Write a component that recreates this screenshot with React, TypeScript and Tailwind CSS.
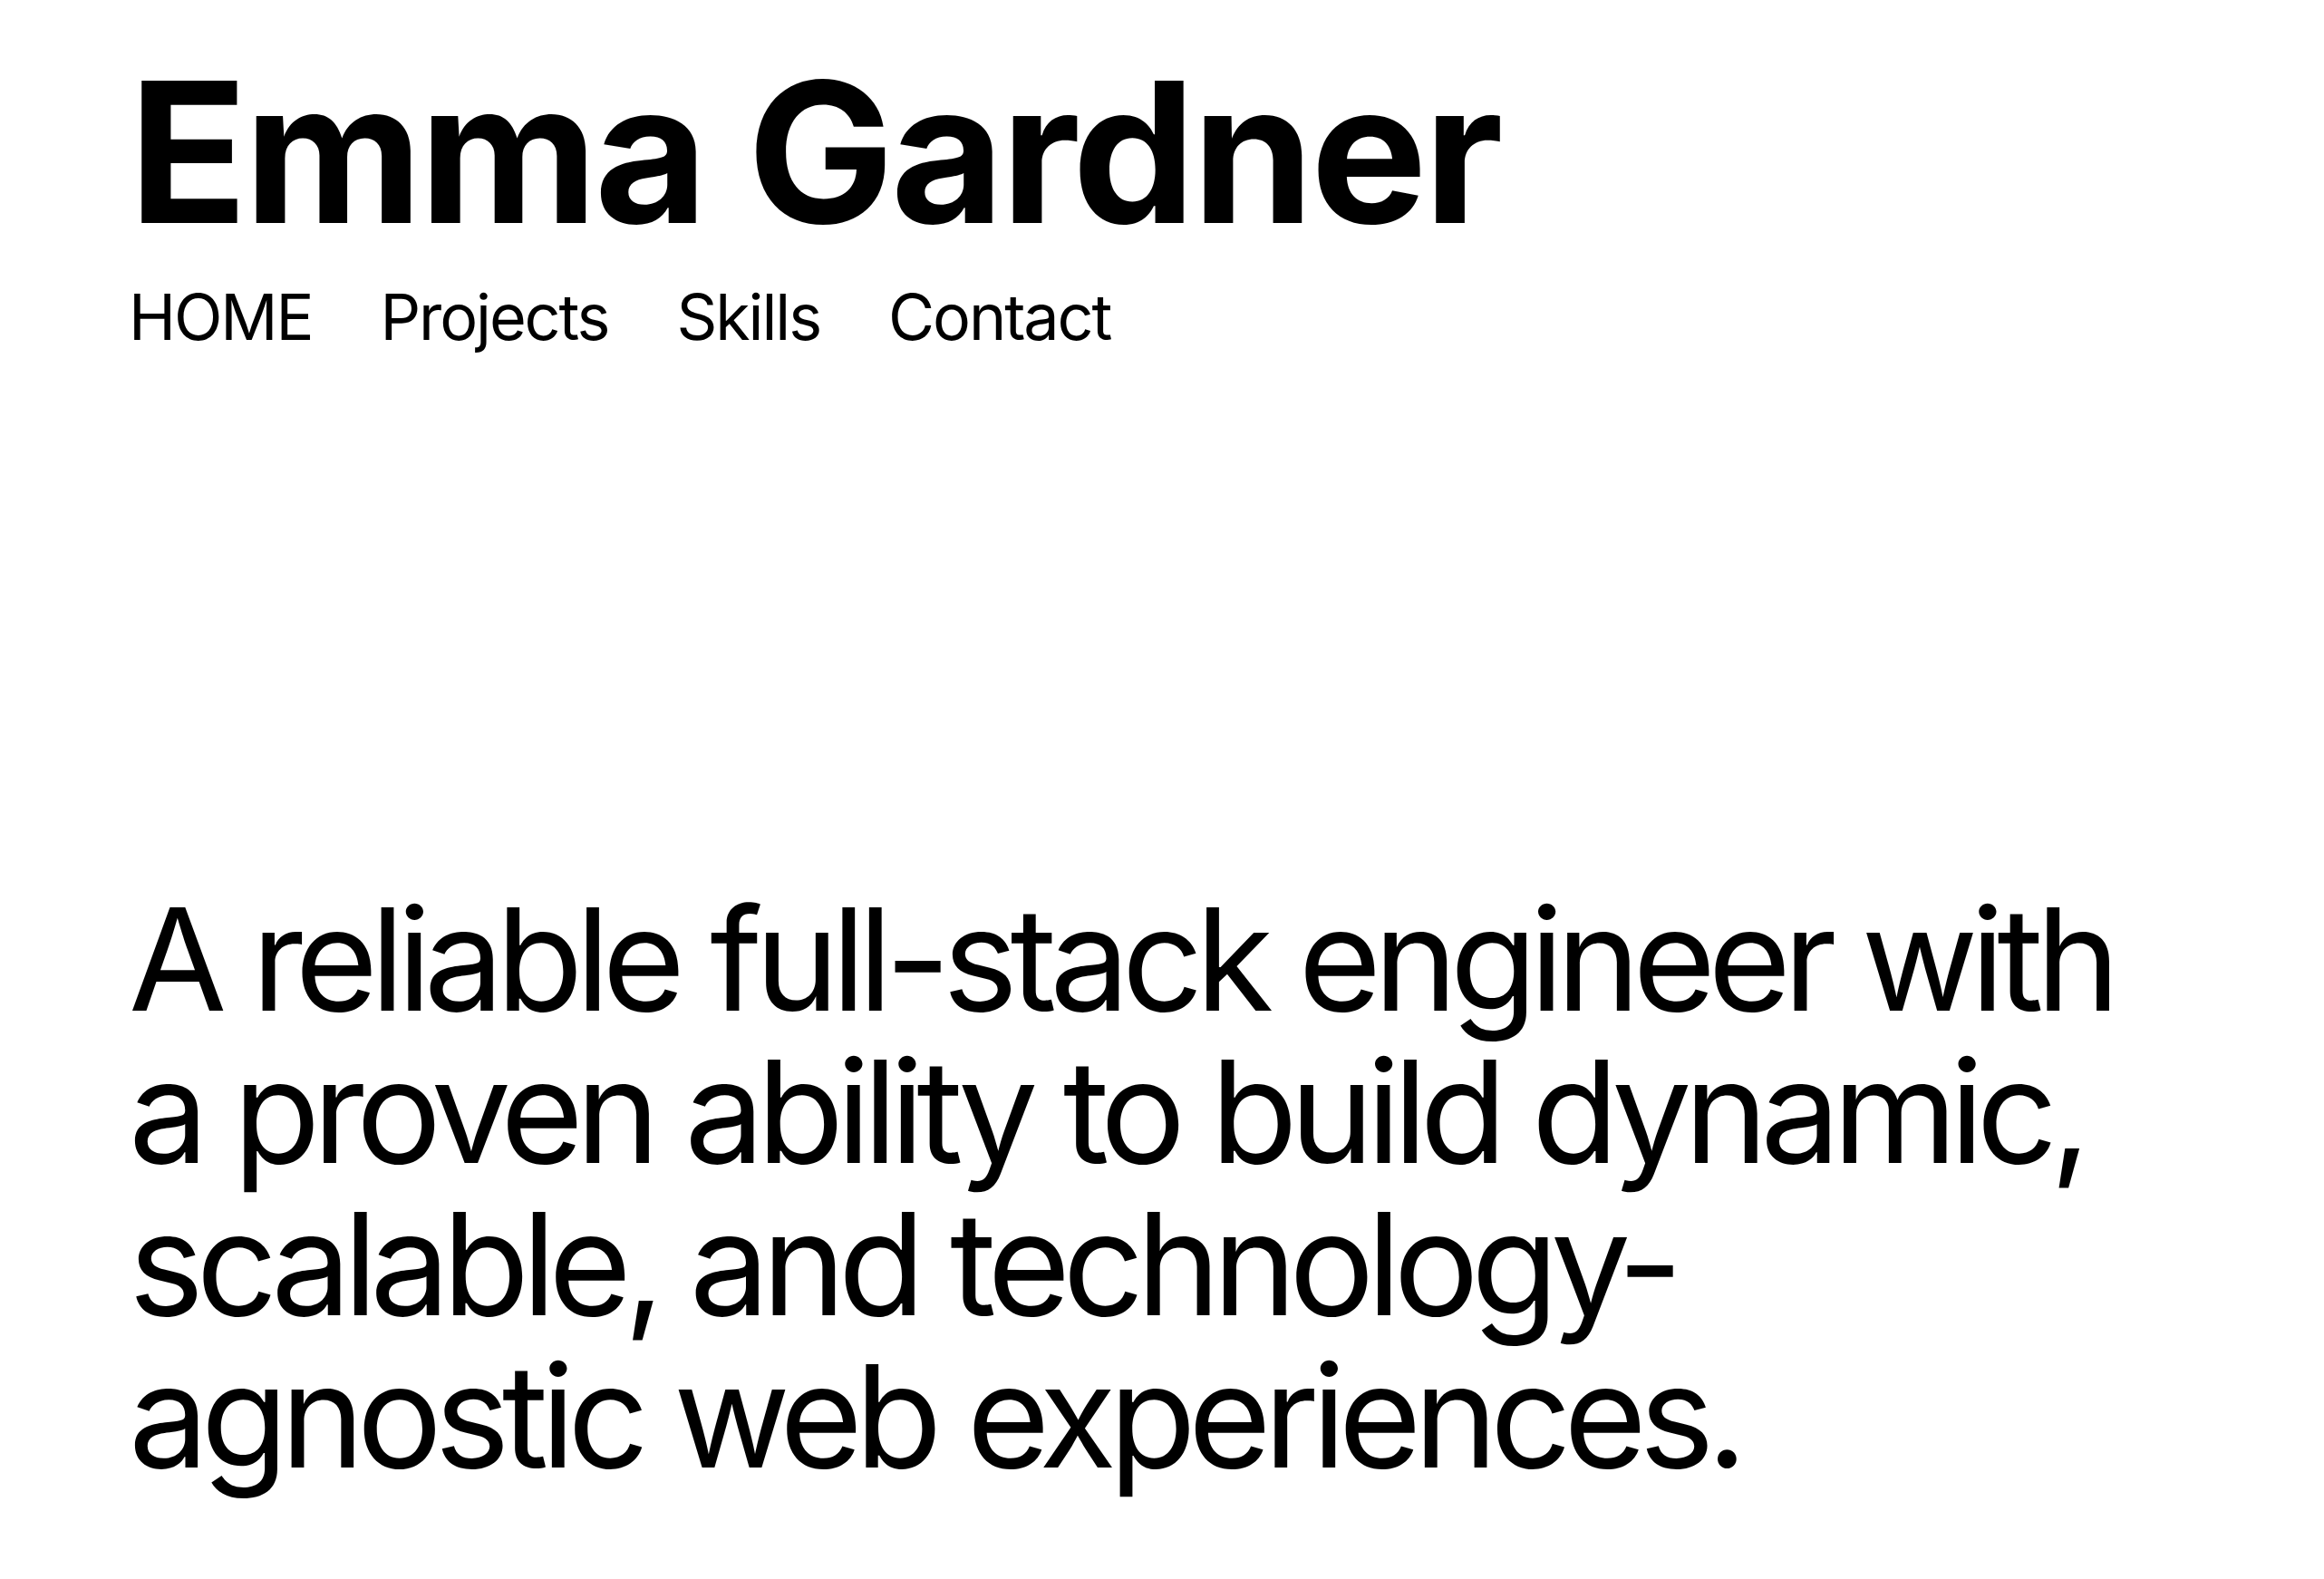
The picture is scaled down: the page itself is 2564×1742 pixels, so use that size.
import React from "react";

export default function App() {
  return (
    <div className="min-h-screen bg-white text-black flex flex-col justify-between pl-[142px] pr-[192px] pt-[60px] pb-[96px] font-['Inter',sans-serif]">
      <header>
        <h1 className="text-[216px] leading-none font-bold tracking-[-0.018em]">Emma Gardner</h1>
        <nav className="mt-[39px] flex gap-[75px] text-[70px] leading-none tracking-[-0.03em]">
          <a href="#">HOME</a>
          <a href="#">Projects</a>
          <a href="#">Skills</a>
          <a href="#">Contact</a>
        </nav>
      </header>
      <p className="text-[157px] leading-[168px] tracking-[-0.054em]">
        A reliable full-stack engineer with a proven ability to build dynamic, scalable, and technology-agnostic web experiences.
      </p>
    </div>
  );
}
